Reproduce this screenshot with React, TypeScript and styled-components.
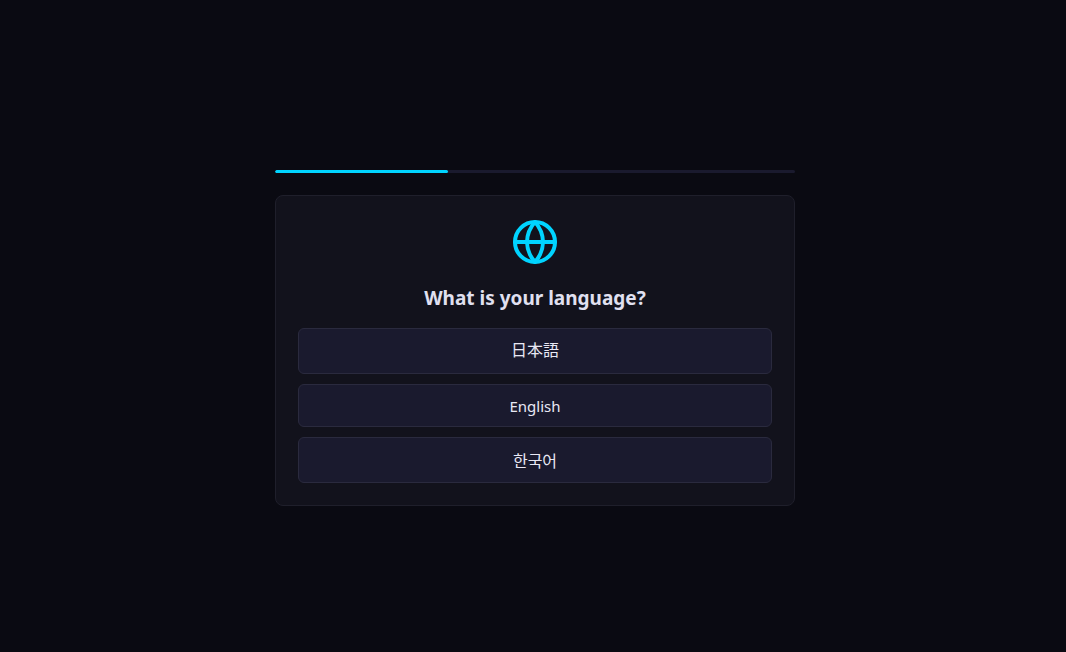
import React from "react";
import styled, { createGlobalStyle } from "styled-components";

const Global = createGlobalStyle`
  html, body { margin: 0; padding: 0; background: #0a0a12; }
  * { box-sizing: border-box; }
`;
const Page = styled.main`
  width: 100%; height: 652px; padding: 24px 0 0 4px; display: flex; flex-direction: column; align-items: center; justify-content: center;
  font-family: "Noto Sans", "Noto Sans CJK JP", sans-serif; color: #e0e0f0;
`;
const Column = styled.div`width: 520px; display: flex; flex-direction: column; gap: 22px;`;
const Track = styled.div`height: 3px; border-radius: 2px; background: #1a1a2e; overflow: hidden;`;
const Fill = styled.div`height: 100%; background: #00d4ff; border-radius: 2px;`;
const Card = styled.section`
  background: #12121c; border: 1px solid #1f1f2b; border-radius: 8px; padding: 22px;
  display: flex; flex-direction: column; align-items: center;
`;
const Title = styled.h2`margin: 18px 0 16px; font-size: 19px; line-height: 28px; font-weight: 700; color: #e0e0f0;`;
const Options = styled.div`width: 100%; display: flex; flex-direction: column; gap: 10px;`;
const Option = styled.button<{ $h: number; $size: number; $raise?: number }>`
  height: ${p => p.$h}px; width: 100%; background: #1a1a2e; border: 1px solid #2a2a3e; border-radius: 6px;
  color: #e8e8f4; font-family: inherit; font-size: ${p => p.$size}px; display: flex; align-items: center; justify-content: center;
  padding: 0 0 ${p => p.$raise ?? 0}px;
`;
export default function App() {
  return (
    <Page>
      <Global />
      <Column>
        <Track><Fill style={{ width: `${100 / 3}%` }} /></Track>
        <Card>
          <svg width="48" height="48" viewBox="0 0 24 24" fill="none" stroke="#00d4ff" strokeWidth="2" strokeLinecap="round" strokeLinejoin="round">
            <circle cx="12" cy="12" r="10" />
            <path d="M12 2a15.3 15.3 0 0 1 4 10 15.3 15.3 0 0 1-4 10 15.3 15.3 0 0 1-4-10 15.3 15.3 0 0 1 4-10z" />
            <path d="M2 12h20" />
          </svg>
          <Title>What is your language?</Title>
          <Options>
            <Option $h={46} $size={16} $raise={4}>日本語</Option>
            <Option $h={43} $size={15}>English</Option>
            <Option $h={46} $size={16}>한국어</Option>
          </Options>
        </Card>
      </Column>
    </Page>
  );
}
